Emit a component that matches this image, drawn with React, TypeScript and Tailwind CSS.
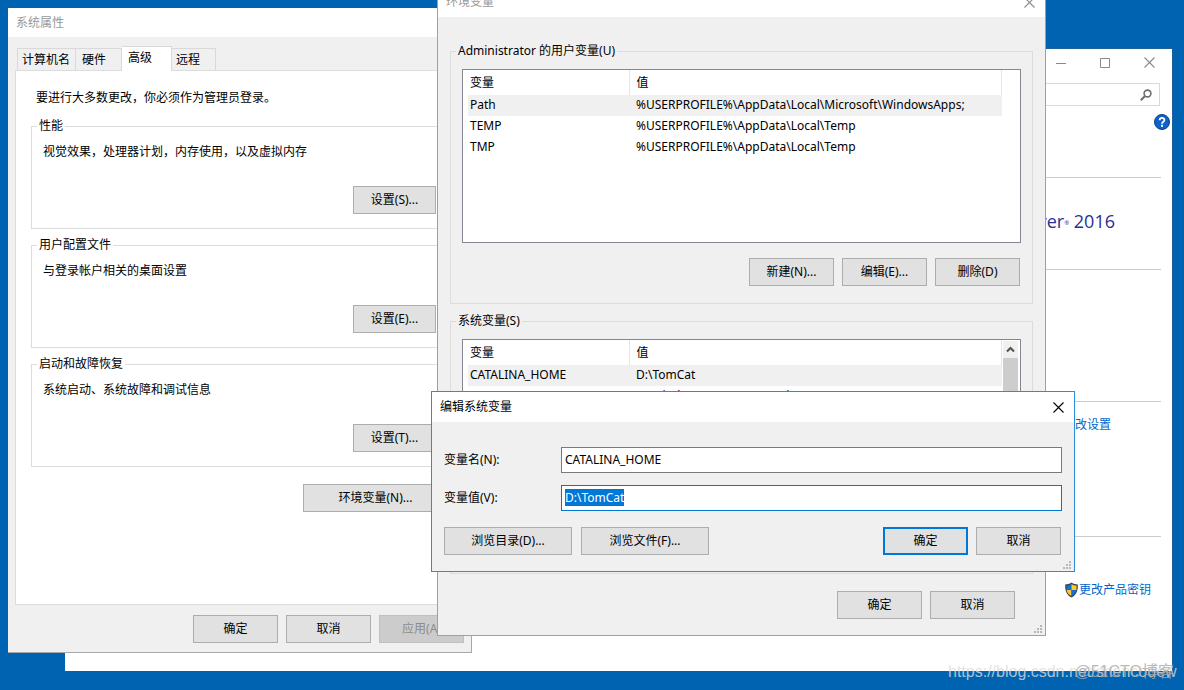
import { ReactNode, useEffect, useRef, useState } from 'react';

interface Variable {
    name: string;
    value: string;
}

const USER_VARS: Variable[] = [
    { name: 'Path', value: '%USERPROFILE%\\AppData\\Local\\Microsoft\\WindowsApps;' },
    { name: 'TEMP', value: '%USERPROFILE%\\AppData\\Local\\Temp' },
    { name: 'TMP', value: '%USERPROFILE%\\AppData\\Local\\Temp' },
];

const SYSTEM_VARS: Variable[] = [
    { name: 'CATALINA_HOME', value: 'D:\\TomCat' },
    { name: 'ComSpec', value: 'C:\\Windows\\system32\\cmd.exe' },
];

const SECTIONS = [
    { title: '性能', text: '视觉效果，处理器计划，内存使用，以及虚拟内存', button: '设置(S)...' },
    { title: '用户配置文件', text: '与登录帐户相关的桌面设置', button: '设置(E)...' },
    { title: '启动和故障恢复', text: '系统启动、系统故障和调试信息', button: '设置(T)...' },
];

const TABS = [
    { label: '计算机名', width: 'w-[59px]' },
    { label: '硬件', width: 'w-[46px]' },
    { label: '高级', width: 'w-[50px]' },
    { label: '远程', width: 'w-[44px]' },
];

const Button = ({ children, className = 'w-[85px]', disabled = false, primary = false }: { children: ReactNode, className?: string, disabled?: boolean, primary?: boolean }) => {
    const look = disabled
        ? 'border border-[#bfbfbf] bg-[#cccccc] text-[#8c8c8c]'
        : primary
            ? 'border-2 border-[#0078d7] bg-[#e1e1e1]'
            : 'border border-[#adadad] bg-[#e1e1e1]';

    return (
        <button disabled={disabled} className={'h-7 shrink-0 flex items-center justify-center ' + look + ' ' + className}>{children}</button>
    )
}

const CloseIcon = ({ color }: { color: string }) => (
    <svg width="11" height="11" viewBox="0 0 11 11" stroke={color} strokeWidth="1.1" fill="none">
        <path d="M0.5 0.5l10 10M10.5 0.5l-10 10" />
    </svg>
)

const Grip = () => (
    <svg width="8" height="8" viewBox="0 0 8 8" fill="#b8b8b8" className="absolute right-[3px] bottom-[2px]">
        <path d="M6 0h2v2H6zM3 3h2v2H3zM6 3h2v2H6zM0 6h2v2H0zM3 6h2v2H3zM6 6h2v2H6z" />
    </svg>
)

const Group = ({ title, className, children }: { title: string, className: string, children: ReactNode }) => (
    <fieldset className="border border-[#dcdcdc]">
        <legend className="ml-[5px] px-0.5">{title}</legend>
        <div className={className}>{children}</div>
    </fieldset>
)

const VariableTable = ({ rows, scroll = false }: { rows: Variable[], scroll?: boolean }) => (
    <div className="h-[174px] flex bg-white border border-[#828790] overflow-hidden">
        <div className="flex-1 pl-[5px]">
            <table className="w-full table-fixed text-left">
                <thead>
                    <tr className="h-[25px]">
                        <th className="w-[161px] pl-0.5 font-normal border-r border-[#e5e5e5]">变量</th>
                        <th className="pl-[7px] font-normal border-r border-[#e5e5e5]">值</th>
                    </tr>
                </thead>
                <tbody>
                    {rows.map((row, i) => (
                        <tr key={row.name} className={'h-[21px] ' + (i === 0 ? 'bg-[#f0f0f0]' : '')}>
                            <td className="pl-0.5 pb-0.5">{row.name}</td>
                            <td className="pl-[7px] pb-0.5 whitespace-nowrap">{row.value}</td>
                        </tr>
                    ))}
                </tbody>
            </table>
        </div>
        <div className="w-[18px] pt-px pl-px pr-0.5">
            {scroll &&
                <div className="h-full flex flex-col bg-[#f0f0f0]">
                    <div className="h-[17px] flex items-center justify-center">
                        <svg width="9" height="7" viewBox="0 0 9 7" fill="none" stroke="#505050" strokeWidth="2">
                            <path d="M1 5.5l3.5-3.5 3.5 3.5" />
                        </svg>
                    </div>
                    <div className="h-[90px] bg-[#cdcdcd]"></div>
                </div>
            }
        </div>
    </div>
)

const ShieldIcon = () => (
    <svg width="15" height="16" viewBox="0 0 14 16">
        <path d="M7 0.5C5 2 2.8 2.4 0.7 2.4C0.5 8.5 1.8 12.8 7 15.4C12.2 12.8 13.5 8.5 13.3 2.4C11.2 2.4 9 2 7 0.5z" fill="#3b4248" />
        <path d="M7 2C5.4 3 3.8 3.5 2 3.6V8H7z" fill="#1272d2" />
        <path d="M7 2C8.6 3 10.2 3.5 12 3.6V8H7z" fill="#fcc934" />
        <path d="M2.1 8H7V14C4 12.5 2.5 10.5 2.1 8z" fill="#fcc934" />
        <path d="M11.9 8H7V14C10 12.5 11.5 10.5 11.9 8z" fill="#1272d2" />
    </svg>
)

const SystemWindow = () => (
    <section className="absolute left-[65px] right-[11px] top-12 h-[623px] bg-white border-t border-r border-[#1f609c]">
        <div className="h-[27px] flex justify-end items-center gap-[34px] pr-[17px]">
            <button aria-label="最小化">
                <svg width="10" height="10" viewBox="0 0 10 10" stroke="#8a8a8a"><path d="M0 5.5h10" /></svg>
            </button>
            <button aria-label="最大化">
                <svg width="10" height="10" viewBox="0 0 10 10" stroke="#8a8a8a" fill="none"><path d="M0.5 0.5h9v9h-9z" /></svg>
            </button>
            <button aria-label="关闭"><CloseIcon color="#8a8a8a" /></button>
        </div>
        <div className="flex justify-end pt-[7px] pr-3">
            <label className="w-[300px] h-[23px] flex items-center border border-[#d9d9d9] pr-[7px]">
                <input type="search" aria-label="搜索" className="flex-1 outline-none" />
                <svg width="12" height="12" viewBox="0 0 12 12" fill="none" stroke="#6d6d6d" strokeWidth="1.6">
                    <circle cx="7.5" cy="4.5" r="3.4" />
                    <path d="M5 7L0.8 11.2" strokeWidth="2" />
                </svg>
            </label>
        </div>
        <div className="flex justify-end pt-2 pr-0.5">
            <button aria-label="帮助">
                <svg width="16" height="16" viewBox="0 0 16 16">
                    <circle cx="8" cy="8" r="7.5" fill="#0b62c9" stroke="#10407e" />
                    <path d="M5.7 6.2C5.7 3.2 10.4 3.2 10.4 6C10.4 7.7 8 7.7 8 9.7" fill="none" stroke="#fff" strokeWidth="1.8" />
                    <path d="M7 10.8h2v2H7z" fill="#fff" />
                </svg>
            </button>
        </div>
        <div className="ml-[200px] mr-[11px]">
            <div className="mt-[47px] h-[92px] pt-[31px] pr-[46px] border-t border-[#cccccc] text-right text-lg leading-6 text-[#2a2f98] font-['Open_Sans',sans-serif]">
                Windows Server<sup className="text-[6px]">®</sup> 2016
            </div>
            <div className="h-[132px] border-t border-[#cccccc]"></div>
            <div className="h-[135px] pt-[15px] pr-[50px] border-t border-[#cccccc] text-right">
                <a href="#settings" className="text-[#0066cc]">更改设置</a>
            </div>
            <div className="pt-[45px] pr-2.5 border-t border-[#cccccc] flex justify-end">
                <a href="#key" className="flex items-center text-[#0066cc]"><ShieldIcon />更改产品密钥</a>
            </div>
        </div>
    </section>
)

const PropertiesWindow = () => {

    const [active, setActive] = useState('高级');

    return (
        <section className="absolute left-2 top-2 w-[464px] h-[645px] flex flex-col bg-[#f0f0f0] border-r border-b border-[#a8a8a8]">
            <h2 className="h-[29px] pl-2 flex items-center bg-white text-[#999999]">系统属性</h2>
            <div className="flex-1 flex flex-col px-[7px] pt-[9px]">
                <div role="tablist" className="h-6 pl-0.5 flex items-end">
                    {TABS.map(tab => (
                        <button key={tab.label} role="tab" aria-selected={active === tab.label} onClick={() => setActive(tab.label)} className={'border-t border-r border-[#d9d9d9] text-left pl-1.5 first:border-l first:pl-1 last:pl-1 ' + tab.width + (active === tab.label ? ' h-[25px] -mb-px pb-[3px] bg-white relative z-10' : ' h-[22px]')}>{tab.label}</button>
                    ))}
                </div>
                <div className="h-[535px] flex flex-col bg-white border border-[#dcdcdc] px-[15px] pt-[19px]">
                    <p className="pl-[5px]">要进行大多数更改，你必须作为管理员登录。</p>
                    <div className="flex flex-col gap-2 mt-3">
                        {SECTIONS.map(section => (
                            <Group key={section.title} title={section.title} className="px-[11px] pt-2.5 pb-3.5">
                                <p>{section.text}</p>
                                <div className="flex justify-end mt-[26px]">
                                    <Button className="w-[83px]">{section.button}</Button>
                                </div>
                            </Group>
                        ))}
                    </div>
                    <div className="flex justify-end mt-[17px]">
                        <Button className="w-[145px]">环境变量(N)...</Button>
                    </div>
                </div>
                <div className="flex justify-end gap-2 pt-[10px]">
                    <Button>确定</Button>
                    <Button>取消</Button>
                    <Button disabled>应用(A)</Button>
                </div>
            </div>
        </section>
    )
}

const EnvironmentWindow = () => (
    <section className="absolute left-[437px] -top-[14px] w-[609px] h-[650px] bg-[#f0f0f0] border border-[#a0a0a0]">
        <header className="h-[30px] pl-2 pr-[10px] flex items-center justify-between bg-white text-[#999999]">
            <h2>环境变量</h2>
            <button aria-label="关闭"><CloseIcon color="#8a8a8a" /></button>
        </header>
        <div className="px-3 pt-[26px] flex flex-col gap-[9px]">
            <Group title="Administrator 的用户变量(U)" className="px-[11px] pt-2.5 pb-[17px]">
                <VariableTable rows={USER_VARS} />
                <div className="flex justify-end gap-2 mt-[15px] pr-px">
                    <Button>新建(N)...</Button>
                    <Button>编辑(E)...</Button>
                    <Button>删除(D)</Button>
                </div>
            </Group>
            <Group title="系统变量(S)" className="px-[11px] pt-2.5 pb-[17px]">
                <VariableTable rows={SYSTEM_VARS} scroll />
                <div className="flex justify-end gap-2 mt-[15px] pr-px">
                    <Button>新建(W)...</Button>
                    <Button>编辑(I)...</Button>
                    <Button>删除(L)</Button>
                </div>
            </Group>
        </div>
        <div className="flex justify-end gap-2 pt-[17px] pr-[30px]">
            <Button>确定</Button>
            <Button>取消</Button>
        </div>
        <Grip />
    </section>
)

const EditWindow = () => {

    const [name, setName] = useState('CATALINA_HOME');
    const [value, setValue] = useState('D:\\TomCat');
    const valueRef = useRef<HTMLInputElement>(null);

    useEffect(() => {
        valueRef.current?.focus();
        valueRef.current?.select();
    }, []);

    return (
        <section className="absolute left-[431px] top-[391px] w-[644px] h-[181px] bg-[#f0f0f0] border border-[#2b8cda]">
            <header className="h-[30px] pl-2 pr-[10px] flex items-center justify-between bg-white">
                <h2>编辑系统变量</h2>
                <button aria-label="关闭"><CloseIcon color="#000000" /></button>
            </header>
            <form className="px-3 pt-[25px]" onSubmit={e => e.preventDefault()}>
                <div className="flex items-center">
                    <label htmlFor="name" className="w-[117px]">变量名(N):</label>
                    <input id="name" value={name} onChange={e => setName(e.target.value)} className="flex-1 h-[26px] px-[3px] pb-0.5 bg-white border border-[#7a7a7a] outline-none" />
                </div>
                <div className="flex items-center mt-3">
                    <label htmlFor="value" className="w-[117px]">变量值(V):</label>
                    <input id="value" ref={valueRef} value={value} onChange={e => setValue(e.target.value)} className="flex-1 h-[26px] px-[3px] pb-0.5 bg-white border border-[#0078d7] outline-none selection:bg-[#0078d7] selection:text-white" />
                </div>
                <div className="flex gap-2 mt-4 pr-px">
                    <Button className="w-32">浏览目录(D)...</Button>
                    <Button className="w-32 ml-px mr-auto">浏览文件(F)...</Button>
                    <Button primary>确定</Button>
                    <Button>取消</Button>
                </div>
            </form>
            <Grip />
        </section>
    )
}

const App = () => {
    return (
        <main lang="zh-CN" className="relative min-h-screen overflow-hidden bg-[#0063b1] text-black text-xs leading-4 font-['Noto_Sans','Noto_Sans_CJK_SC',sans-serif]">
            <SystemWindow />
            <PropertiesWindow />
            <EnvironmentWindow />
            <EditWindow />
            <p className="absolute left-[948px] top-[662px] text-base leading-5 whitespace-nowrap text-[#dcdcdc]/80 font-['Liberation_Sans',sans-serif]">https://blog.csdn.net/shencodew</p>
            <p className="absolute right-2.5 top-[662px] text-base leading-5 text-[#a8a8a8]/80 font-['Liberation_Sans','Noto_Sans_CJK_SC',sans-serif]">@51CTO博客</p>
        </main>
    )
}


export default App
